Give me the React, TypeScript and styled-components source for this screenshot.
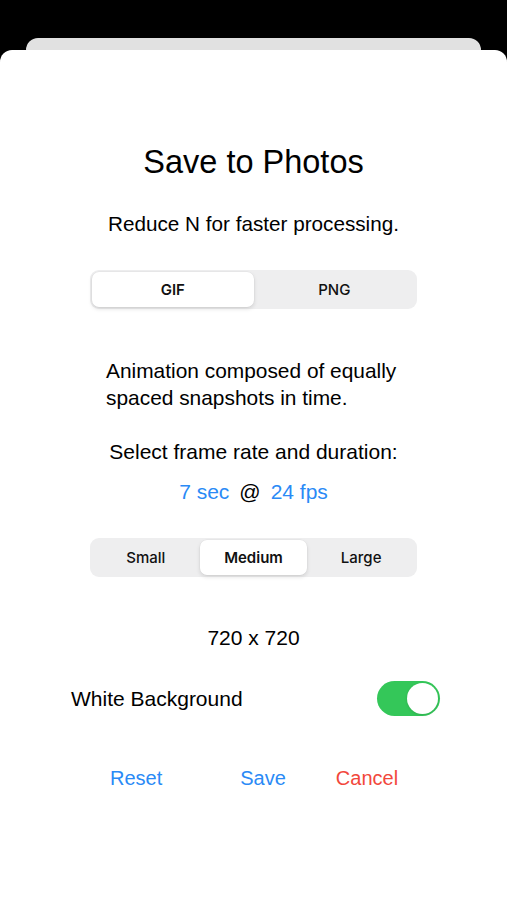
import React, { useState } from "react";
import styled, { createGlobalStyle } from "styled-components";

const GlobalStyle = createGlobalStyle`
  html, body {
    margin: 0;
    padding: 0;
    background: #000;
  }

  body {
    font-family: "Liberation Sans", Arial, sans-serif;
    color: #000;
  }
`;

const FORMATS = ["GIF", "PNG"];
const SIZES = ["Small", "Medium", "Large"];

const App: React.FC = () => {
  const [format, setFormat] = useState("GIF");
  const [size, setSize] = useState("Medium");
  const [white, setWhite] = useState(true);

  return (
    <Screen>
      <GlobalStyle />
      <BackCard />
      <Sheet>
        <Title>Save to Photos</Title>
        <Subtitle>Reduce N for faster processing.</Subtitle>

        <Segmented $top={34}>
          {FORMATS.map((f) => (
            <Segment key={f} $active={f === format} onClick={() => setFormat(f)}>
              {f}
            </Segment>
          ))}
        </Segmented>

        <Description>
          Animation composed of equally spaced snapshots in time.
        </Description>

        <Label>Select frame rate and duration:</Label>
        <RateRow>
          <LinkText>7 sec</LinkText>
          <span>@</span>
          <LinkText>24 fps</LinkText>
        </RateRow>

        <Segmented $top={33}>
          {SIZES.map((s) => (
            <Segment key={s} $active={s === size} onClick={() => setSize(s)}>
              {s}
            </Segment>
          ))}
        </Segmented>

        <Dimensions>720 x 720</Dimensions>

        <ToggleRow>
          <span>White Background</span>
          <Toggle $on={white} onClick={() => setWhite(!white)}>
            <Knob />
          </Toggle>
        </ToggleRow>

        <Actions>
          <ActionButton $color="#2a8af6">Reset</ActionButton>
          <ActionButton $color="#2a8af6" $gap={78}>
            Save
          </ActionButton>
          <ActionButton $color="#f2473b" $gap={50}>
            Cancel
          </ActionButton>
        </Actions>
      </Sheet>
    </Screen>
  );
};

export default App;

const Screen = styled.div`
  min-height: 900px;
  padding-top: 38px;
  box-sizing: border-box;
  background: #000;
  display: flex;
  flex-direction: column;
`;

const BackCard = styled.div`
  height: 12px;
  margin: 0 26px;
  background: #e1e1e1;
  border-radius: 12px 12px 0 0;
`;

const Sheet = styled.div`
  flex: 1;
  display: flex;
  flex-direction: column;
  align-items: center;
  background: #fff;
  border-radius: 12px 12px 0 0;
  padding-top: 94px;
`;

const Title = styled.h1`
  margin: 0;
  font-size: 32.5px;
  font-weight: 400;
  line-height: 36px;
`;

const Subtitle = styled.div`
  margin-top: 32px;
  font-size: 20.7px;
  line-height: 24px;
`;

const Segmented = styled.div<{ $top: number }>`
  margin-top: ${(p) => p.$top}px;
  width: 327px;
  height: 39px;
  box-sizing: border-box;
  padding: 2px;
  display: flex;
  background: #eeeeef;
  border-radius: 9px;
`;

const Segment = styled.button<{ $active: boolean }>`
  flex: 1;
  border: none;
  border-radius: 7px;
  font-family: Inter, "Liberation Sans", sans-serif;
  font-size: 15px;
  font-weight: ${(p) => (p.$active ? 600 : 500)};
  color: #111;
  background: ${(p) => (p.$active ? "#fff" : "transparent")};
  box-shadow: ${(p) =>
    p.$active ? "0 2px 4px rgba(0,0,0,0.12), 0 0 0 0.5px rgba(0,0,0,0.04)" : "none"};
  cursor: pointer;
`;

const Description = styled.p`
  align-self: stretch;
  margin: 48px 0 0;
  padding: 0 90px 0 106px;
  font-size: 20.9px;
  line-height: 27px;
`;

const Label = styled.div`
  margin-top: 27px;
  font-size: 21px;
  line-height: 27px;
`;

const RateRow = styled.div`
  margin-top: 13px;
  display: flex;
  gap: 10px;
  font-size: 21px;
  line-height: 27px;
`;

const LinkText = styled.span`
  color: #2a8af6;
`;

const Dimensions = styled.div`
  margin-top: 47px;
  font-size: 21px;
  line-height: 27px;
`;

const ToggleRow = styled.div`
  align-self: stretch;
  margin-top: 30px;
  padding: 0 67px 0 71px;
  display: flex;
  align-items: center;
  justify-content: space-between;
  font-size: 21px;
`;

const Toggle = styled.div<{ $on: boolean }>`
  width: 63px;
  height: 35px;
  padding: 2px;
  box-sizing: border-box;
  border-radius: 18px;
  background: ${(p) => (p.$on ? "#34c759" : "#e9e9eb")};
  display: flex;
  justify-content: ${(p) => (p.$on ? "flex-end" : "flex-start")};
  cursor: pointer;
`;

const Knob = styled.div`
  width: 31px;
  height: 31px;
  border-radius: 50%;
  background: #fff;
  box-shadow: 0 1px 3px rgba(0, 0, 0, 0.12);
`;

const Actions = styled.div`
  align-self: stretch;
  margin-top: 49px;
  padding-left: 110px;
  display: flex;
`;

const ActionButton = styled.button<{ $color: string; $gap?: number }>`
  margin-left: ${(p) => p.$gap ?? 0}px;
  padding: 0;
  border: none;
  background: none;
  font-family: inherit;
  font-size: 20px;
  line-height: 27px;
  color: ${(p) => p.$color};
  cursor: pointer;
`;
